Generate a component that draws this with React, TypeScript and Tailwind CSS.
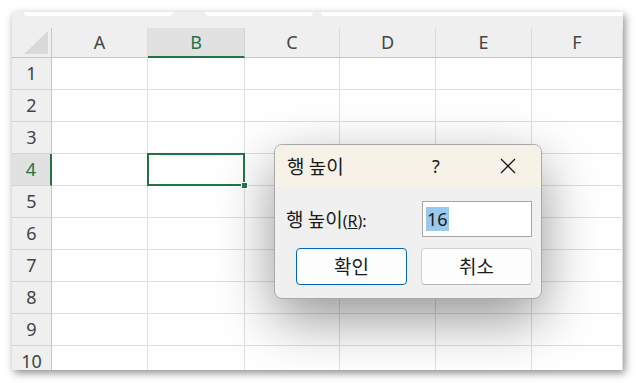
import React from 'react';

const COLS = ['A', 'B', 'C', 'D', 'E', 'F'];
const ROWS = [1, 2, 3, 4, 5, 6, 7, 8, 9, 10];

const UI_FONT = "font-['Segoe_UI','Noto_Sans','Noto_Sans_CJK_KR',sans-serif]";
const KR_FONT = "font-['Noto_Sans_CJK_KR','Noto_Sans',sans-serif]";

function HeaderRow() {
  return (
    <>
      {/* corner with the select-all triangle */}
      <div className="bg-[#efefef] border-r border-b border-[#c6c6c6] flex items-end justify-end pr-[3px] pb-[3px]">
        <svg width="24" height="23" viewBox="0 0 24 23">
          <polygon points="24,0 24,23 0,23" fill="#d9d9d9" />
        </svg>
      </div>
      {COLS.map((c) => {
        const sel = c === 'B';
        return (
          <div
            key={c}
            className={
              sel
                ? 'bg-[#e1e1e1] border-r border-[#d4d4d4] border-b-2 border-b-[#217346] flex items-center justify-center text-[18px] text-[#217346]'
                : 'bg-[#efefef] border-r border-[#dcdcdc] border-b border-b-[#c6c6c6] flex items-center justify-center text-[18px] text-[#444]'
            }
          >
            {c}
          </div>
        );
      })}
    </>
  );
}

function BodyRow({ n }: { n: number }) {
  const sel = n === 4;
  return (
    <>
      <div
        className={
          sel
            ? 'bg-[#e1e1e1] border-r-2 border-r-[#217346] border-b border-[#d4d4d4] flex items-center justify-center text-[18px] text-[#217346]'
            : 'bg-[#efefef] border-r border-r-[#c6c6c6] border-b border-[#d4d4d4] flex items-center justify-center text-[18px] text-[#444]'
        }
      >
        {n}
      </div>
      {COLS.map((c) => (
        <div key={c} className="relative bg-white border-r border-b border-[#dedede]">
          {sel && c === 'B' && (
            <>
              <div className="absolute z-10 -left-[1px] -top-[1px] right-[-1px] bottom-[-1px] border-2 border-[#217346]" />
              <div className="absolute z-10 right-[-4px] bottom-[-4px] w-[7px] h-[7px] bg-[#217346] border border-white" />
            </>
          )}
        </div>
      ))}
    </>
  );
}

function Dialog() {
  return (
    <div className={`absolute left-[274px] top-[144px] w-[268px] h-[155px] rounded-[8px] border border-[#a9a9a9] bg-[#f0f0f0] overflow-hidden shadow-[0_20px_55px_rgba(0,0,0,0.42)] ${KR_FONT}`}>
      {/* title bar */}
      <div className="h-[42px] bg-[#f7f2e7] flex items-center pl-[12px] pr-[20px] text-[19px] text-[#1a1a1a]">
        <span className="flex-1">행 높이</span>
        <span className={`w-[16px] text-center mr-[56px] text-[18px] ${UI_FONT}`}>?</span>
        <svg width="16" height="16" viewBox="0 0 16 16" className="mr-[5px]">
          <path d="M1 1L15 15M15 1L1 15" stroke="#1a1a1a" strokeWidth="1.3" fill="none" />
        </svg>
      </div>
      {/* body */}
      <div className="pl-[11px] pr-[9px] pt-[14px]">
        <div className="flex items-center h-[36px]">
          <span className="flex-1 text-[19px] text-[#1a1a1a] leading-none">
            행 높이<span className={`text-[16px] ${UI_FONT}`}>(<span className="underline">R</span>):</span>
          </span>
          <div className="w-[110px] h-[36px] bg-white border border-[#a6a6a6] flex items-center pl-[3px]">
            <span className={`bg-[#99c9ef] text-[18px] leading-[24px] px-[1px] text-[#1a1a1a] ${UI_FONT}`}>16</span>
          </div>
        </div>
        <div className="flex gap-[14px] mt-[11px] pl-[10px]">
          <button className="w-[111px] h-[37px] rounded-[4px] border border-[#0067c0] bg-[#fdfdfd] text-[19px] text-[#1a1a1a]">
            확인
          </button>
          <button className="w-[111px] h-[37px] rounded-[4px] border border-[#d0d0d0] border-b-[#b5b5b5] bg-[#fdfdfd] text-[19px] text-[#1a1a1a]">
            취소
          </button>
        </div>
      </div>
    </div>
  );
}

export default function App() {
  return (
    <div className={`relative w-[636px] h-[383px] bg-white overflow-hidden pl-[12px] pt-[12px] ${UI_FONT}`}>
      <div className="w-[611px] h-[358px] bg-[#efefef] flex flex-col overflow-hidden shadow-[2px_3px_8px_rgba(0,0,0,0.45)]">
        {/* cropped ribbon edge */}
        <div className="h-[16px] flex items-start shrink-0">
          <div className="ml-[12px] w-[149px] h-[4px] bg-white rounded-b-[6px]" />
          <div className="ml-[32px] w-[108px] h-[4px] bg-white rounded-b-[6px]" />
          <div className="ml-[8px] flex-1 h-[4px] bg-white rounded-bl-[6px]" />
        </div>
        <div className="grid grid-cols-[40px_96px_97px_95px_96px_96px_1fr] grid-rows-[30px_repeat(9,32px)_32px] flex-1">
          <HeaderRow />
          {ROWS.map((n) => (
            <BodyRow key={n} n={n} />
          ))}
        </div>
      </div>
      <Dialog />
    </div>
  );
}
